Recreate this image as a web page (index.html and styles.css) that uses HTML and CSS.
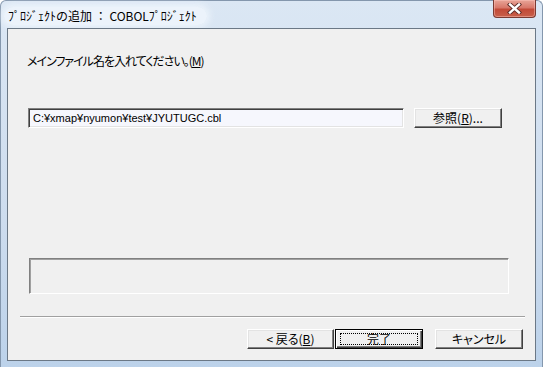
FILE: index.html
```html
<!DOCTYPE html>
<html lang="ja">
<head>
    <meta charset="UTF-8">
    <title>プロジェクトの追加</title>
    <link rel="stylesheet" href="styles.css">
</head>
<body>
    <div class="window">
        <div class="titleBar">
            <span class="titleText">ﾌﾟﾛｼﾞｪｸﾄの追加 ： COBOLﾌﾟﾛｼﾞｪｸﾄ</span>
            <div class="closeBtn">
                <svg width="17" height="11" viewBox="0 0 17 11">
                    <path d="M4 1.5 L13 9.5 M13 1.5 L4 9.5" stroke="#5a2a26" stroke-width="4.2" stroke-linecap="square"/>
                    <path d="M4 1.5 L13 9.5 M13 1.5 L4 9.5" stroke="#ffffff" stroke-width="2.4" stroke-linecap="square"/>
                </svg>
            </div>
        </div>
        <div class="client">
            <div class="label">メインファイル名を入れてください。(<u>M</u>)</div>
            <div class="fileRow">
                <div class="fileInput">C:¥xmap¥nyumon¥test¥JYUTUGC.cbl</div>
                <div class="btn browse">参照(<u>R</u>)...</div>
            </div>
            <div class="msgBox"></div>
            <div class="sep"></div>
            <div class="btnRow">
                <div class="btn">&lt; 戻る(<u>B</u>)</div>
                <div class="btn default"><span class="focus">完了</span></div>
                <div class="btn cancel">キャンセル</div>
            </div>
        </div>
    </div>
</body>
</html>
```

FILE: styles.css
```css
body {
    margin: 0;
    font-family: "Noto Sans CJK JP", "Liberation Sans", sans-serif;
    font-size: 12px;
    color: #000;
}
.window {
    width: 543px;
    height: 367px;
    box-sizing: border-box;
    display: flex;
    flex-direction: column;
    border: 1px solid #8497ad;
    border-bottom: 0;
    border-radius: 6px 6px 0 0;
    background: linear-gradient(to bottom, #dbe7f4 0%, #cddcee 60%, #bcd2ea 100%);
}
.titleBar {
    height: 27px;
    display: flex;
    justify-content: space-between;
    align-items: flex-start;
}
.titleText {
    margin: 6px 0 0 3px;
    padding: 0 10px 0 4px;
    height: 18px;
    line-height: 18px;
    font-size: 12px;
    border-radius: 9px;
    background: rgba(240, 246, 252, 0.8);
    box-shadow: 0 0 6px 3px rgba(240, 246, 252, 0.8);
}
.closeBtn {
    width: 43px;
    height: 18px;
    box-sizing: border-box;
    margin: -1px 6px 0 0;
    border: 1px solid #7a3a32;
    border-top: 0;
    border-radius: 0 0 4px 4px;
    background: linear-gradient(to bottom, #e8a598 0%, #d8786a 45%, #c24a38 55%, #c8604a 100%);
    box-shadow: inset 0 0 0 1px rgba(255, 200, 190, 0.45);
    display: flex;
    align-items: center;
    justify-content: center;
}
.client {
    flex: 1;
    margin: 0 6px 6px 6px;
    border: 1px solid #6b7886;
    background: #f0f0f0;
    display: flex;
    flex-direction: column;
}
.label {
    margin: 25px 0 0 19px;
    height: 14px;
    line-height: 14px;
    font-size: 12px;
    letter-spacing: -1px;
    font-feature-settings: "palt";
}
.fileRow {
    margin: 40px 0 0 20px;
    display: flex;
    height: 20px;
}
.fileInput {
    width: 376px;
    box-sizing: border-box;
    border: 1px solid;
    border-color: #808080 #ffffff #ffffff #808080;
    box-shadow: inset 1px 1px 0 #404040, inset -1px -1px 0 #e3e3e3;
    background: #f6f7fd;
    padding-left: 4px;
    line-height: 18px;
    font-family: "Liberation Sans", sans-serif;
    font-size: 11px;
}
.btn {
    width: 87px;
    height: 20px;
    box-sizing: border-box;
    border: 1px solid;
    border-color: #ffffff #404040 #404040 #ffffff;
    box-shadow: inset -1px -1px 0 #808080, inset 1px 1px 0 #e3e3e3;
    background: #f0f0f0;
    display: flex;
    align-items: center;
    justify-content: center;
    line-height: 16px;
    font-feature-settings: "palt";
}
.browse {
    margin-left: 10px;
    width: 88px;
}
.msgBox {
    margin: 130px 0 0 21px;
    width: 480px;
    height: 36px;
    box-sizing: border-box;
    border: 1px solid;
    border-color: #808080 #ffffff #ffffff #808080;
    box-shadow: inset 1px 1px 0 #a0a0a0;
}
.sep {
    margin: 22px 0 0 12px;
    width: 505px;
    border-top: 1px solid #a0a0a0;
    border-bottom: 1px solid #ffffff;
}
.btnRow {
    margin: 11px 0 0 239px;
    display: flex;
    gap: 1px;
}
.default {
    width: 88px;
    border: 1px solid #000;
    box-shadow: inset 1px 1px 0 #ffffff, inset -1px -1px 0 #404040, inset -2px -2px 0 #808080;
}
.focus {
    width: 78px;
    height: 12px;
    box-sizing: border-box;
    border: 1px dotted #000;
    display: flex;
    align-items: center;
    justify-content: center;
}
.cancel {
    margin-left: 11px;
    width: 88px;
}
```
